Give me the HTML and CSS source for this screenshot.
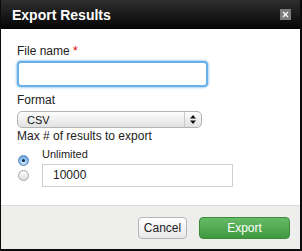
FILE: index.html
```html
<!DOCTYPE html>
<html lang="en">
<head>
    <meta charset="UTF-8">
    <title>Export Results</title>
    <link rel="stylesheet" href="styles.css">
</head>
<body>
    <div class="dialog">
        <div class="titlebar">
            <span class="title">Export Results</span>
            <span class="close-btn">
                <svg width="7" height="7" viewBox="0 0 7 7">
                    <path d="M1 1 L6 6 M6 1 L1 6" stroke="#fff" stroke-width="1.2" fill="none"/>
                </svg>
            </span>
        </div>

        <div class="dialog-body">
            <div class="field-label">File name <span class="required">*</span></div>
            <div class="text-input focused"></div>

            <div class="field-label format-label">Format</div>
            <div class="select-box">
                <span class="select-value">CSV</span>
                <span class="select-arrows">
                    <svg width="6" height="9" viewBox="0 0 6 9">
                        <path d="M3 0 L6 3.5 L0 3.5 Z M0 5.5 L6 5.5 L3 9 Z" fill="#111"/>
                    </svg>
                </span>
            </div>

            <div class="field-label max-label">Max # of results to export</div>
            <div class="choice-row first">
                <span class="radio checked"><span class="dot"></span></span>
                <span class="choice-text">Unlimited</span>
            </div>
            <div class="choice-row">
                <span class="radio"></span>
                <div class="text-input count-input">10000</div>
            </div>
        </div>

        <div class="dialog-footer">
            <button class="btn btn-cancel">Cancel</button>
            <button class="btn btn-export">Export</button>
        </div>
    </div>
</body>
</html>
```

FILE: styles.css
```css
body {
    margin: 0;
    font-family: "Liberation Sans", Arial, sans-serif;
    background-color: #fff;
}

.dialog {
    width: 302px;
    height: 251px;
    box-sizing: border-box;
    border-left: 1px solid #0a0a0a;
    border-right: 2px solid #0a0a0a;
    border-bottom: 2px solid #0a0a0a;
    display: flex;
    flex-direction: column;
}

.titlebar {
    height: 29px;
    flex-shrink: 0;
    padding: 0 9px 0 11px;
    display: flex;
    align-items: center;
    justify-content: space-between;
    background: linear-gradient(#2e2e2e, #050505);
}

.title {
    color: #fff;
    font-weight: bold;
    font-size: 14px;
    line-height: 16px;
}

.close-btn {
    width: 11px;
    height: 11px;
    background-color: #7c7c7c;
    display: flex;
    align-items: center;
    justify-content: center;
}

.dialog-body {
    flex: 1;
    background-color: #fff;
    padding: 15px 16px 0;
}

.field-label {
    font-size: 12px;
    line-height: 14px;
    color: #222;
}

.required {
    color: #d00;
}

.text-input {
    box-sizing: border-box;
    background-color: #fff;
    font-size: 12px;
    color: #222;
}

.text-input.focused {
    width: 191px;
    height: 26px;
    margin-top: 3px;
    border: 2px solid #68b0ea;
    border-radius: 4px;
    box-shadow: 0 0 2px 1px rgba(104, 176, 234, 0.55);
}

.format-label {
    margin-top: 6px;
}

.select-box {
    width: 185px;
    height: 17px;
    margin-top: 4px;
    box-sizing: border-box;
    border: 1px solid #b3b3b3;
    border-radius: 5px;
    background: linear-gradient(#fdfdfd, #e2e2e2);
    display: flex;
    align-items: center;
}

.select-value {
    flex: 1;
    padding-left: 9px;
    font-size: 11px;
    color: #111;
}

.select-arrows {
    width: 16px;
    height: 100%;
    border-left: 1px solid #c9c9c9;
    display: flex;
    align-items: center;
    justify-content: center;
}

.max-label {
    margin-top: 1px;
}

.choice-row {
    display: flex;
    align-items: center;
    height: 23px;
}

.choice-row.first {
    height: 21px;
    align-items: flex-start;
}

.choice-row.first .radio {
    margin-top: 12px;
}

.radio {
    width: 11px;
    height: 11px;
    margin-left: 1px;
    box-sizing: border-box;
    border: 1px solid #a5a5a5;
    border-radius: 50%;
    background: linear-gradient(#fdfdfd, #dedede);
    display: flex;
    align-items: center;
    justify-content: center;
    flex-shrink: 0;
}

.radio.checked {
    border-color: #5a86b8;
    background: radial-gradient(circle at 50% 70%, #d8ecff, #7fb4ea 60%, #5b93d4);
}

.dot {
    width: 3px;
    height: 3px;
    border-radius: 50%;
    background-color: #10263f;
}

.choice-text {
    margin-left: 13px;
    padding-top: 5px;
    font-size: 11px;
    line-height: 12px;
    color: #222;
}

.count-input {
    width: 191px;
    height: 23px;
    margin-left: 13px;
    border: 1px solid #cfcfcf;
    padding-left: 10px;
    line-height: 21px;
}

.dialog-footer {
    height: 44px;
    flex-shrink: 0;
    box-sizing: border-box;
    border-top: 1px solid #dcdcdc;
    background-color: #eeeeec;
    padding-right: 10px;
    display: flex;
    align-items: center;
    justify-content: flex-end;
    gap: 12px;
}

.btn {
    height: 22px;
    border-radius: 4px;
    font-family: "Liberation Sans", Arial, sans-serif;
    font-size: 12px;
    padding: 0;
}

.btn-cancel {
    width: 49px;
    border: 1px solid #b5b5b5;
    background: linear-gradient(#ffffff, #e8e8e8);
    color: #222;
}

.btn-export {
    width: 91px;
    border: 1px solid #3b8b3b;
    background: linear-gradient(#66bb66, #3f983f);
    color: #fff;
}
```
